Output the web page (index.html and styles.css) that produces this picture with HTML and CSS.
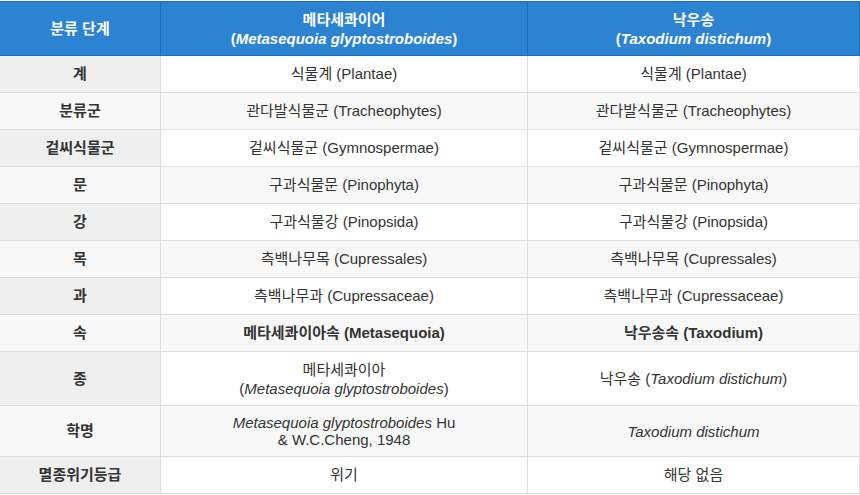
FILE: index.html
```html
<!DOCTYPE html>
<html lang="ko">
<head>
<meta charset="utf-8">
<title>메타세콰이어 vs 낙우송</title>
<link rel="stylesheet" href="styles.css">
</head>
<body>
<table class="tax">
  <colgroup>
    <col class="c1">
    <col class="c2">
    <col class="c3">
  </colgroup>
  <thead>
    <tr>
      <th>분류 단계</th>
      <th>메타세콰이어<span class="sub">(<i>Metasequoia glyptostroboides</i>)</span></th>
      <th>낙우송<span class="sub">(<i>Taxodium distichum</i>)</span></th>
    </tr>
  </thead>
  <tbody>
    <tr><td class="rank">계</td><td>식물계 (Plantae)</td><td>식물계 (Plantae)</td></tr>
    <tr><td class="rank">분류군</td><td>관다발식물군 (Tracheophytes)</td><td>관다발식물군 (Tracheophytes)</td></tr>
    <tr><td class="rank">겉씨식물군</td><td>겉씨식물군 (Gymnospermae)</td><td>겉씨식물군 (Gymnospermae)</td></tr>
    <tr><td class="rank">문</td><td>구과식물문 (Pinophyta)</td><td>구과식물문 (Pinophyta)</td></tr>
    <tr><td class="rank">강</td><td>구과식물강 (Pinopsida)</td><td>구과식물강 (Pinopsida)</td></tr>
    <tr><td class="rank">목</td><td>측백나무목 (Cupressales)</td><td>측백나무목 (Cupressales)</td></tr>
    <tr><td class="rank">과</td><td>측백나무과 (Cupressaceae)</td><td>측백나무과 (Cupressaceae)</td></tr>
    <tr><td class="rank">속</td><td><b>메타세콰이아속 (Metasequoia)</b></td><td><b>낙우송속 (Taxodium)</b></td></tr>
    <tr><td class="rank">종</td><td>메타세콰이아<span class="sub">(<i>Metasequoia glyptostroboides</i>)</span></td><td>낙우송 (<i>Taxodium distichum</i>)</td></tr>
    <tr><td class="rank">학명</td><td class="latin"><i>Metasequoia glyptostroboides</i> Hu<br>&amp; W.C.Cheng, 1948</td><td class="latin"><i>Taxodium distichum</i></td></tr>
    <tr><td class="rank">멸종위기등급</td><td>위기</td><td>해당 없음</td></tr>
  </tbody>
</table>
</body>
</html>
```

FILE: styles.css
```css
html, body {
  margin: 0;
  padding: 0;
  background: #ffffff;
}

body {
  font-family: "Liberation Sans", Arial, "Noto Sans CJK KR", sans-serif;
  font-size: 15px;
  color: #333333;
}

.tax {
  border-collapse: collapse;
  table-layout: fixed;
  width: 860px;
  margin: 1px 0 0 -1px;
}

.c1 { width: 161px; }
.c2 { width: 367px; }
.c3 { width: 332px; }

.tax th,
.tax td {
  padding: 8px 10px;
  line-height: 20px;
  text-align: center;
  vertical-align: middle;
}

.tax th {
  background: #2b83d2;
  color: #ffffff;
  font-weight: bold;
  border: 1px solid #1b6cb8;
}

.tax td {
  border: 1px solid #dddddd;
}

.tax tbody tr:nth-child(even) td {
  background: #f8f8f8;
}

.tax tbody td.rank {
  background: #efefef;
  font-weight: bold;
}

.sub {
  display: block;
  line-height: 17px;
}

.tax td.latin {
  line-height: 17px;
}
```
